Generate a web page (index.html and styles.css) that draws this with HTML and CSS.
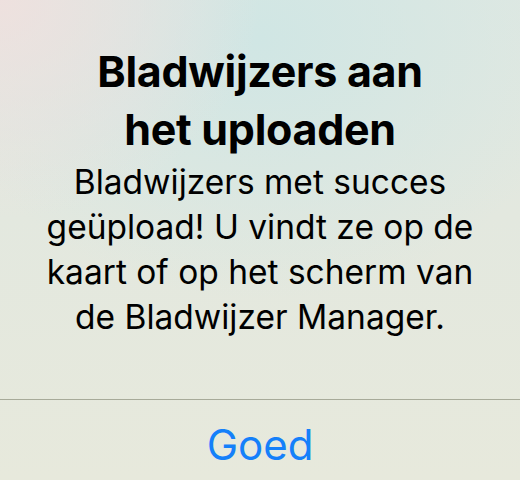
FILE: index.html
```html
<!DOCTYPE html>
<html lang="nl">
<head>
<meta charset="utf-8">
<link rel="stylesheet" href="styles.css">
</head>
<body>
<div class="alert">
  <div class="content">
    <h1 class="title">Bladwijzers aan<br>het uploaden</h1>
    <p class="message">Bladwijzers met succes geüpload! U vindt ze op de kaart of op het scherm van de Bladwijzer Manager.</p>
  </div>
  <div class="actions">
    <button class="action">Goed</button>
  </div>
</div>
</body>
</html>
```
FILE: styles.css
```css
html, body {
  margin: 0;
  padding: 0;
  width: 520px;
  height: 480px;
  overflow: hidden;
}
body {
  font-family: Inter, "Noto Sans", sans-serif;
  background:
    radial-gradient(ellipse 260px 220px at 0px 0px, rgba(240,224,222,0.9), rgba(240,224,222,0) 100%),
    radial-gradient(ellipse 320px 260px at 260px 40px, rgba(208,230,228,1), rgba(208,230,228,0) 100%),
    linear-gradient(180deg, #dfe8e2 0%, #e3e8df 45%, #e7e9dc 100%);
}
.alert {
  display: flex;
  flex-direction: column;
  height: 480px;
}
.content {
  height: 400px;
  box-sizing: border-box;
  padding-top: 42px;
  text-align: center;
  border-bottom: 1px solid #a7aa99;
}
.title {
  margin: 0 0 2px;
  font-size: 43px;
  font-weight: 700;
  line-height: 58px;
  letter-spacing: -0.3px;
  color: #000;
}
.message {
  margin: 0 auto;
  width: 460px;
  font-size: 33.5px;
  font-weight: 400;
  line-height: 45px;
  color: #000;
}
.actions {
  flex: 1;
  display: flex;
  align-items: center;
  justify-content: center;
}
.action {
  border: 0;
  background: none;
  font-family: Inter, "Noto Sans", sans-serif;
  font-size: 42px;
  color: #1580fa;
  padding: 0;
  margin-top: 8px;
}
```
